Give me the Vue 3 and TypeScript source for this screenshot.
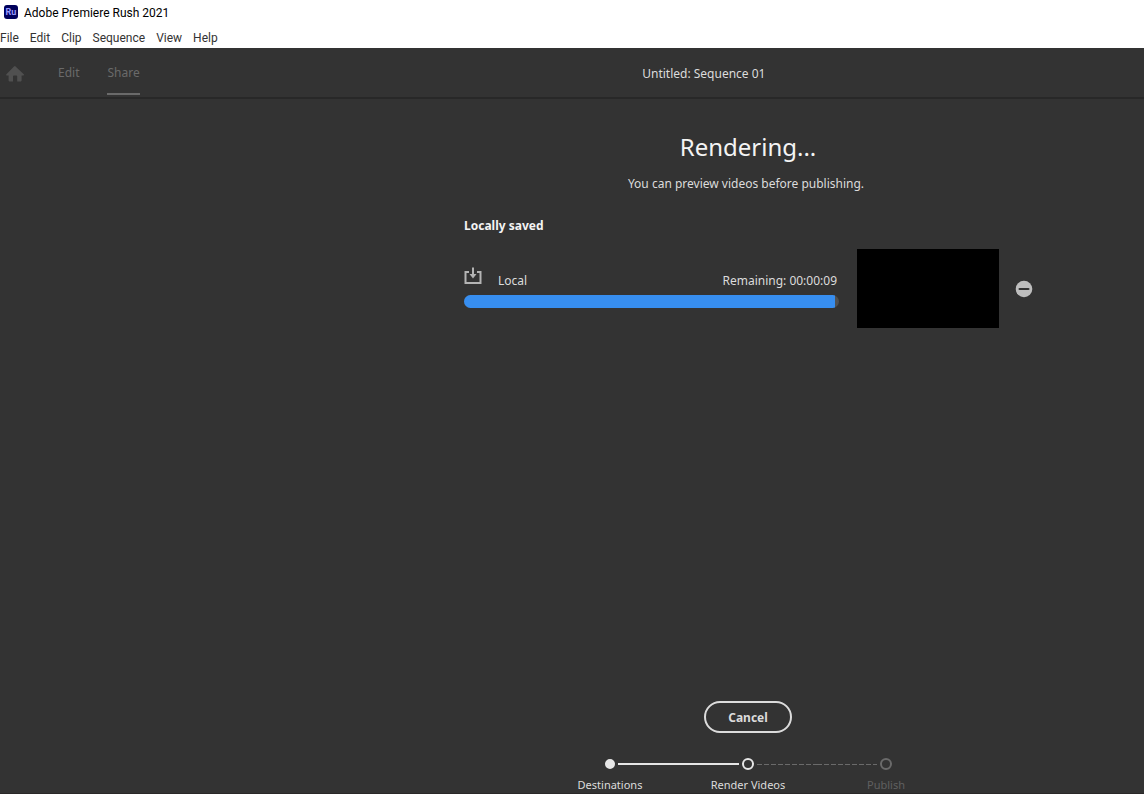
<script setup lang="ts">
import { ref } from 'vue'

interface Step {
  label: string
  state: 'done' | 'current' | 'pending'
}

const menus: string[] = ['File', 'Edit', 'Clip', 'Sequence', 'View', 'Help']
const steps: Step[] = [
  { label: 'Destinations', state: 'done' },
  { label: 'Render Videos', state: 'current' },
  { label: 'Publish', state: 'pending' },
]
const progress = ref(99)
const remaining = ref('00:00:09')
</script>

<template>
  <div class="window">
    <div class="titlebar">
      <span class="logo">Ru</span>
      <span>Adobe Premiere Rush 2021</span>
    </div>
    <nav class="menubar" aria-label="Menu">
      <button v-for="m in menus" :key="m" type="button">{{ m }}</button>
    </nav>
    <header class="header">
      <button class="home" type="button" aria-label="Home">
        <svg width="20" height="18" viewBox="0 0 20 18">
          <path d="M10 1 L19 9.6 Q19.2 10.4 18.4 10.4 H16.6 V15.6 Q16.6 16.4 15.8 16.4 H12.2 V11.4 Q12.2 10.6 11.4 10.6 H8.8 Q8 10.6 8 11.4 V16.4 H4.4 Q3.6 16.4 3.6 15.6 V10.4 H1.6 Q0.8 10.4 1.2 9.6 L9 1.6 Q9.5 1 10 1 Z" fill="#505050" />
        </svg>
      </button>
      <button class="tab" type="button">Edit</button>
      <button class="tab active" type="button">Share</button>
      <div class="doc">Untitled: Sequence 01</div>
    </header>

    <main class="main">
      <h1>Rendering...</h1>
      <p class="sub">You can preview videos before publishing.</p>

      <section class="group">
        <h2>Locally saved</h2>
        <div class="item">
          <div class="job">
            <div class="info">
              <svg class="save" width="18" height="18" viewBox="0 0 18 18" fill="none" stroke="#b4b4b4" stroke-width="2">
                <path d="M5 5 H1.5 V16 H16.5 V5 H13" />
                <path d="M9 0.5 V8" />
                <path d="M5.5 7 H12.5 L9 11.5 Z" fill="#b4b4b4" stroke="none" />
              </svg>
              <span class="name">Local</span>
              <span class="remaining">Remaining: {{ remaining }}</span>
            </div>
            <div class="track" role="progressbar" aria-label="Local" :aria-valuenow="progress">
              <div class="fill" :style="{ width: progress + '%' }"></div>
            </div>
          </div>
          <div class="thumb"></div>
          <button class="remove" type="button" aria-label="Remove">
            <svg width="18" height="18" viewBox="0 0 18 18">
              <circle cx="9" cy="9" r="8.3" fill="#bebebe" />
              <path d="M4.6 9 H13.4" stroke="#333" stroke-width="2.2" stroke-linecap="round" />
            </svg>
          </button>
        </div>
      </section>

      <footer class="footer">
        <button class="cancel" type="button">Cancel</button>
        <ol class="steps">
          <li v-for="s in steps" :key="s.label" :class="s.state">
            <span class="rail"><i class="dot"></i></span>
            <span>{{ s.label }}</span>
          </li>
        </ol>
      </footer>
    </main>
  </div>
</template>

<style>
html,
body {
  background: #333;
}
</style>

<style scoped>
.window {
  display: flex;
  flex-direction: column;
  box-sizing: border-box;
  min-height: 100vh;
  background: #333;
  border-bottom: 1px solid #2a2828;
  color: #dcdcdc;
  font-family: "Noto Sans", "Open Sans", sans-serif;
  font-size: 12px;
  line-height: 18px;
}
button {
  margin: 0;
  padding: 0;
  border: 0;
  background: none;
  color: inherit;
  font: inherit;
}
.titlebar {
  display: flex;
  align-items: center;
  gap: 6px;
  height: 26px;
  padding-left: 4px;
  background: #fff;
  color: #000;
  font-family: Roboto, sans-serif;
}
.logo {
  width: 14px;
  height: 14px;
  margin-bottom: 2px;
  border-radius: 3px;
  background: #00005b;
  color: #9999ff;
  font-size: 9px;
  font-weight: 700;
  line-height: 14px;
  text-align: center;
}
.menubar {
  display: flex;
  align-items: center;
  gap: 11px;
  height: 20px;
  padding-top: 2px;
  background: #fff;
  color: #333;
  font-family: Roboto, sans-serif;
}
.header {
  display: flex;
  align-items: stretch;
  height: 49px;
  border-bottom: 2px solid #282828;
  color: #6a6a6a;
}
.home {
  display: flex;
  align-items: center;
  margin: 0 33px 0 5px;
  padding-top: 3px;
}
.tab {
  box-sizing: border-box;
  height: 47px;
  margin-right: 28px;
  padding-top: 4px;
  border-bottom: 2px solid transparent;
}
.tab.active {
  margin-right: 0;
  border-color: #6a6a6a;
}
.doc {
  flex: 1;
  align-self: center;
  padding: 2px 0 0 124px;
  color: #dcdcdc;
  text-align: center;
}
.main {
  display: flex;
  flex: 1;
  flex-direction: column;
  align-items: center;
  padding: 31px 0 0 352px;
}
h1 {
  margin: 0;
  color: #f4f4f4;
  font-size: 24px;
  font-weight: 400;
  line-height: 34px;
}
.sub {
  margin: 11px 4px 24px 0;
}
.group {
  width: 568px;
}
h2 {
  margin: 0 0 14px;
  color: #f4f4f4;
  font-size: 12px;
  font-weight: 700;
  line-height: 18px;
}
.item {
  display: flex;
  align-items: center;
  margin-right: -1px;
}
.job {
  flex: 1;
  padding-bottom: 3px;
}
.info {
  display: flex;
  align-items: flex-end;
  padding: 0 2px 5px 0;
}
.save {
  margin: 0 16px 5px 0;
}
.remaining {
  margin-left: auto;
}
.track {
  height: 13px;
  overflow: hidden;
  border-radius: 7px;
  background: #505050;
}
.fill {
  height: 100%;
  background: #378ef0;
}
.thumb {
  width: 142px;
  height: 79px;
  margin: 0 16px 0 18px;
  background: #000;
}
.remove {
  display: flex;
}
.footer {
  display: flex;
  flex-direction: column;
  align-items: center;
  margin-top: auto;
}
.cancel {
  box-sizing: border-box;
  width: 88px;
  height: 32px;
  padding-top: 2px;
  border: 2px solid #dcdcdc;
  border-radius: 16px;
  font-weight: 700;
}
.steps {
  display: flex;
  margin: 24px 0 0;
  padding: 0;
  list-style: none;
  font-size: 11px;
  line-height: 17px;
}
.steps li {
  width: 138px;
  text-align: center;
}
.rail {
  display: flex;
  align-items: center;
  gap: 3px;
  height: 14px;
  margin-bottom: 5px;
}
.rail::before,
.rail::after {
  flex: 1;
  border-top: 2px solid transparent;
  content: "";
}
.dot {
  box-sizing: border-box;
  width: 12px;
  height: 12px;
  border: 2px solid #e6e6e6;
  border-radius: 50%;
}
.done .dot {
  width: 10px;
  height: 10px;
  background: #e6e6e6;
}
.done .rail::after,
.current .rail::before {
  border-color: #e6e6e6;
}
.current .rail::after,
.pending .rail::before {
  height: 1px;
  border: 0;
  background: repeating-linear-gradient(to right, #6a6a6a 0 5px, transparent 5px 7px);
}
.pending {
  color: #606060;
}
.pending .dot {
  border-color: #6a6a6a;
}
</style>
